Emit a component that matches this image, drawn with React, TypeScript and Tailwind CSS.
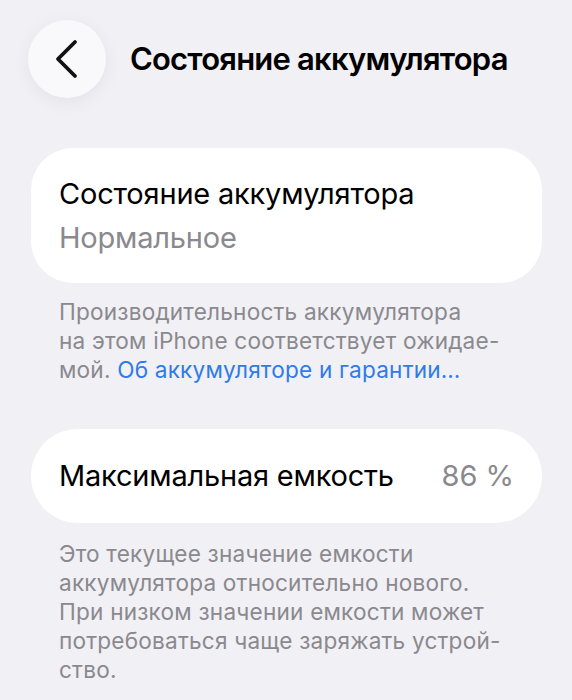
import React from 'react';

const font = { fontFamily: 'Inter, "Noto Sans", sans-serif' };

const BackButton: React.FC = () => (
  <button className="flex h-[78px] w-[78px] shrink-0 items-center justify-center rounded-full bg-[#f9f9fb] shadow-[0_4px_18px_rgba(0,0,0,0.06)]">
    <svg width="26" height="40" viewBox="0 0 26 40" fill="none">
      <path d="M21 3 L4 20 L21 37" stroke="#111" strokeWidth="3.8" strokeLinecap="round" strokeLinejoin="round" />
    </svg>
  </button>
);

const Footnote: React.FC<{ children: React.ReactNode; className?: string }> = ({ children, className = '' }) => (
  <p className={`px-[59px] text-[22.6px] leading-[29px] tracking-[0.2px] text-[#8a898e] ${className}`}>{children}</p>
);

export default function App() {
  return (
    <div className="min-h-[700px] w-full bg-[#f1f0f5] text-black" style={font}>
      {/* top bar */}
      <div className="flex items-center gap-6 pl-[28px] pt-[20px]">
        <BackButton />
        <h1 className="text-[31px] font-semibold tracking-[-0.8px]">Состояние аккумулятора</h1>
      </div>

      {/* battery health */}
      <div className="ml-[31px] mr-[30px] mt-[50px] rounded-[42px] bg-white px-[28px] pb-[23px] pt-[24px]">
        <div className="text-[29px] leading-[44px] tracking-[-0.2px]">Состояние аккумулятора</div>
        <div className="text-[29px] leading-[44px] tracking-[-0.2px] text-[#8a898e]">Нормальное</div>
      </div>
      <Footnote className="pt-[14px]">
        Производительность аккумулятора
        <br />
        на этом iPhone соответствует ожидае-
        <br />
        мой. <span className="text-[#2f7be8]">Об аккумуляторе и гарантии…</span>
      </Footnote>

      {/* maximum capacity */}
      <div className="ml-[31px] mr-[30px] mt-[45px] flex h-[94px] items-center justify-between rounded-[47px] bg-white px-[28px]">
        <span className="text-[29px] tracking-[-0.2px]">Максимальная емкость</span>
        <span className="text-[29px] text-[#8a898e]">86 %</span>
      </div>
      <Footnote className="pt-[16px]">
        Это текущее значение емкости
        <br />
        аккумулятора относительно нового.
        <br />
        При низком значении емкости может
        <br />
        потребоваться чаще заряжать устрой-
        <br />
        ство.
      </Footnote>
    </div>
  );
}
